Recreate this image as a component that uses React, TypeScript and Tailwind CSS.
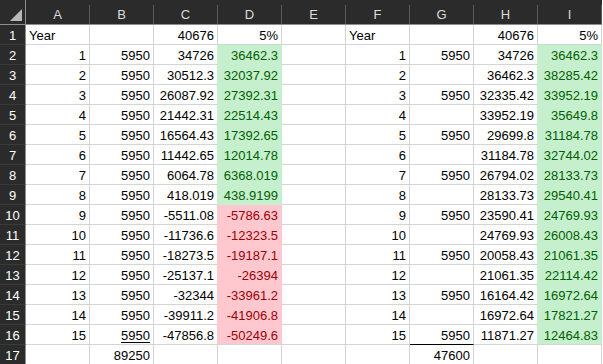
import React from 'react'

const cols = ['A', 'B', 'C', 'D', 'E', 'F', 'G', 'H', 'I']

const cData = ['34726', '30512.3', '26087.92', '21442.31', '16564.43', '11442.65', '6064.78', '418.019', '-5511.08', '-11736.6', '-18273.5', '-25137.1', '-32344', '-39911.2', '-47856.8']
const dData = ['36462.3', '32037.92', '27392.31', '22514.43', '17392.65', '12014.78', '6368.019', '438.9199', '-5786.63', '-12323.5', '-19187.1', '-26394', '-33961.2', '-41906.8', '-50249.6']
const hData = ['34726', '36462.3', '32335.42', '33952.19', '29699.8', '31184.78', '26794.02', '28133.73', '23590.41', '24769.93', '20058.43', '21061.35', '16164.42', '16972.64', '11871.27']
const iData = ['36462.3', '38285.42', '33952.19', '35649.8', '31184.78', '32744.02', '28133.73', '29540.41', '24769.93', '26008.43', '21061.35', '22114.42', '16972.64', '17821.27', '12464.83']

const rows: string[][] = [
  ['Year', '', '40676', '5%', '', 'Year', '', '40676', '5%'],
  ...cData.map((c, i) => [
    String(i + 1),
    '5950',
    c,
    dData[i],
    '',
    String(i + 1),
    i % 2 === 0 ? '5950' : '',
    hData[i],
    iData[i],
  ]),
  ['', '89250', '', '', '', '', '47600', '', ''],
]

type Fill = 'green' | 'red' | null

// conditional formatting fills, row index r is 1-based sheet row
function fillOf(r: number, c: number): Fill {
  if (r < 2 || r > 16) return null
  if (c === 3) return r <= 9 ? 'green' : 'red'
  if (c === 8) return 'green'
  return null
}

function cellClass(r: number, c: number, value: string) {
  const fill = fillOf(r, c)
  const right = fillOf(r, c + 1)
  const isNum = value !== '' && !isNaN(parseFloat(value))
  const cls = [
    'flex items-end overflow-hidden whitespace-nowrap border-r border-b border-[#d4d4d4] px-[3px] pb-[1px] leading-[15px]',
    isNum ? 'justify-end' : 'justify-start',
  ]
  if (fill === 'green') cls.push('bg-[#c6efce] text-[#006100]')
  else if (fill === 'red') cls.push('bg-[#ffc7ce] text-[#9c0006]')
  else cls.push('bg-white text-black')

  if (fill === 'green' || right === 'green') cls.push('border-r-[#c6efce]')
  else if (fill === 'red' || right === 'red') cls.push('border-r-[#ffc7ce]')

  if (fill === 'green' && r < 16) cls.push('border-b-[#c6efce]')
  if (fill === 'red' && r < 16) cls.push('border-b-[#ffc7ce]')

  // total line above G17
  if (r === 16 && c === 6) cls.push('border-b-black')
  return cls.join(' ')
}

export default function App() {
  return (
    <div className="h-[364px] w-[603px] overflow-hidden bg-white font-['Liberation_Sans',Arial,sans-serif] text-[13px]">
      <div className="grid grid-cols-[26px_repeat(9,64px)] grid-rows-[25px_repeat(17,20px)]">
        {/* corner */}
        <div className="flex items-start justify-start border-r border-b border-[#8e8e8e] bg-[#2b2b2b]">
          <svg width="25" height="24" viewBox="0 0 25 24">
            <polygon points="22,9 22,21 10,21" fill="#b8b8b8" />
          </svg>
        </div>
        {cols.map((c) => (
          <div key={c} className="flex border-b border-[#8e8e8e] bg-[#2b2b2b]">
            <div className="flex flex-1 items-end justify-center pb-[2px] leading-[15px] text-[#dcdcdc]">{c}</div>
            <div className="mt-[5px] w-px bg-[#5c5c5c]" />
          </div>
        ))}

        {rows.map((row, ri) => {
          const r = ri + 1
          return (
            <React.Fragment key={r}>
              <div className="flex items-end justify-center border-r border-b border-[#8e8e8e] border-b-[#3a3a3a] bg-[#2b2b2b] pb-[1px] leading-[15px] text-white">
                {r}
              </div>
              {row.map((v, ci) => (
                <div key={ci} className={cellClass(r, ci, v)}>
                  {r === 16 && ci === 1 ? (
                    <span className="underline decoration-1 underline-offset-2">{v}</span>
                  ) : (
                    v
                  )}
                </div>
              ))}
            </React.Fragment>
          )
        })}
      </div>
    </div>
  )
}
